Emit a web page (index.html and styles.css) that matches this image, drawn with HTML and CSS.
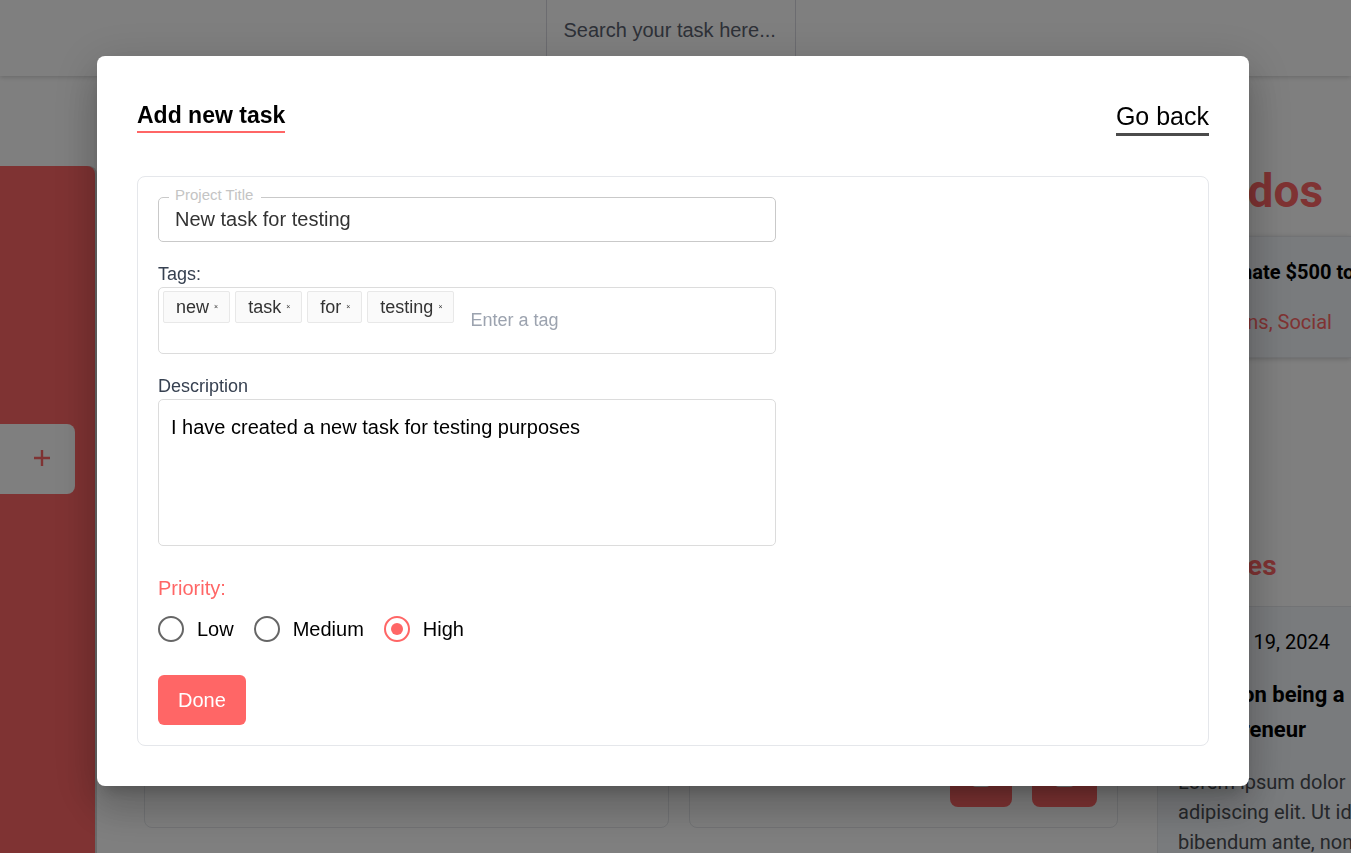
FILE: index.html
```html
<!DOCTYPE html>
<html lang="en">
<head>
<meta charset="utf-8">
<meta name="viewport" content="width=device-width, initial-scale=1">
<title>Add new task</title>
<link rel="stylesheet" href="styles.css">
</head>
<body>
<div class="page">
  <header class="topbar">
    <input class="search" type="text" placeholder="Search your task here..." aria-label="Search tasks">
  </header>
  <div class="columns">
    <nav class="sidebar">
      <button class="add-project" type="button" aria-label="Add project">
        <svg width="16" height="16" viewBox="0 0 16 16" fill="none" stroke="currentColor" stroke-width="2.4"><path d="M8 0v16M0 8h16"/></svg>
      </button>
    </nav>
    <main class="board">
      <article class="card"></article>
      <article class="card card-actions">
        <button class="card-button" type="button" aria-label="Edit task">
          <svg width="20" height="20" viewBox="0 0 20 20" fill="none" stroke="currentColor" stroke-width="2"><path d="M9 3H4a2 2 0 0 0-2 2v11a3 3 0 0 0 3 3h10a3 3 0 0 0 3-3v-5M8 12l9-9 2 2-9 9H8z"/></svg>
        </button>
        <button class="card-button" type="button" aria-label="Delete task">
          <svg width="23" height="20" viewBox="0 0 23 20" fill="none" stroke="currentColor" stroke-width="2"><path d="M1 4h21M8 4V1h7v3M3 4v12a3 3 0 0 0 3 3h11a3 3 0 0 0 3-3V4M9 8v7M14 8v7"/></svg>
        </button>
      </article>
    </main>
    <aside class="side">
      <h2 class="side-title">Todos</h2>
      <section class="todo">
        <h3 class="todo-name">And donate $500 to</h3>
        <p class="todo-tags">Donations, Social</p>
      </section>
      <h2 class="side-title side-title-small">Notes</h2>
      <section class="note">
        <p class="note-date">October 19, 2024</p>
        <h3 class="note-name">Notes on being a<br>entrepreneur</h3>
        <p class="note-text">Lorem ipsum dolor<br>adipiscing elit. Ut id<br>bibendum ante, non</p>
      </section>
    </aside>
  </div>
</div>

<div class="backdrop">
  <div class="dialog" role="dialog" aria-modal="true" aria-labelledby="dialog-title">
    <div class="dialog-head">
      <h1 class="dialog-title" id="dialog-title">Add new task</h1>
      <button class="go-back" type="button">Go back</button>
    </div>
    <form class="form">
      <div class="fields">
        <div class="title-field">
          <label class="title-label" for="title">Project Title</label>
          <input class="title-input" id="title" type="text" value="New task for testing">
        </div>
        <div class="field">
          <label class="label" for="tag">Tags:</label>
          <div class="tags">
            <span class="tag">new <button class="tag-remove" type="button" aria-label="Remove new">×</button></span>
            <span class="tag">task <button class="tag-remove" type="button" aria-label="Remove task">×</button></span>
            <span class="tag">for <button class="tag-remove" type="button" aria-label="Remove for">×</button></span>
            <span class="tag">testing <button class="tag-remove" type="button" aria-label="Remove testing">×</button></span>
            <input class="tag-input" id="tag" type="text" placeholder="Enter a tag">
          </div>
        </div>
        <div class="field">
          <label class="label" for="description">Description</label>
          <textarea class="description" id="description">I have created a new task for testing purposes</textarea>
        </div>
      </div>
      <fieldset class="priority">
        <legend class="priority-title">Priority:</legend>
        <div class="options">
          <label class="option"><input class="radio" type="radio" name="priority" value="low">Low</label>
          <label class="option"><input class="radio" type="radio" name="priority" value="medium">Medium</label>
          <label class="option"><input class="radio" type="radio" name="priority" value="high" checked>High</label>
        </div>
      </fieldset>
      <button class="done" type="submit">Done</button>
    </form>
  </div>
</div>
</body>
</html>
```
FILE: styles.css
```css
*,
*::before {
  box-sizing: border-box;
}

:root {
  --accent: #ff6666;
  --line: #e5e7eb;
}

body,
h1,
h2,
h3,
p,
fieldset {
  margin: 0;
}

body {
  font-family: "Liberation Sans", Arial, sans-serif;
  font-size: 20px;
  line-height: 30px;
  color: #000;
  overflow: hidden;
}

button,
input,
textarea {
  font: inherit;
  color: inherit;
  margin: 0;
}

button {
  border: 0;
  padding: 0;
  background: none;
  cursor: pointer;
}

/* Page under the dialog */

.page {
  display: flex;
  flex-direction: column;
  height: 100vh;
  overflow: hidden;
  font-family: Roboto, sans-serif;
}

.topbar {
  display: flex;
  justify-content: center;
  flex: none;
  height: 76px;
  padding-right: 10px;
  box-shadow: 0 1px 5px rgba(0, 0, 0, 0.2);
}

.search {
  width: 250px;
  height: 62px;
  padding: 0 0 0 17px;
  border: 1px solid #d8d8e0;
  border-top: 0;
  background: none;
  font-family: "Liberation Sans", Arial, sans-serif;
}

.search::placeholder {
  color: #5b6270;
  opacity: 1;
}

.columns {
  display: grid;
  grid-template-columns: 95px 1fr 194px;
  grid-template-rows: minmax(0, 1fr);
  flex: 1;
  min-height: 0;
}

.sidebar {
  margin-top: 90px;
  padding: 258px 20px 0 0;
  background: var(--accent);
  border-radius: 0 8px 0 0;
  box-shadow: 2px 0 0 #d4d4d4;
}

.add-project {
  display: flex;
  align-items: center;
  justify-content: flex-end;
  width: 100%;
  height: 70px;
  padding: 0 25px 2px 0;
  border-radius: 0 8px 8px 0;
  background: #fff;
  color: var(--accent);
}

.board {
  display: grid;
  grid-template-columns: 525fr 429fr;
  gap: 20px;
  padding: 90px 39px 25px 49px;
}

.card {
  border: 1px solid var(--line);
  border-radius: 8px;
}

.card-actions {
  display: flex;
  align-items: flex-end;
  justify-content: flex-end;
  gap: 20px;
  padding: 20px;
}

.card-button {
  display: flex;
  padding: 20px 21px;
  border-radius: 8px;
  background: var(--accent);
  color: #fff;
}

.side {
  white-space: nowrap;
}

.side-title {
  padding: 85px 0 15px 40px;
  font-size: 46px;
  line-height: 60px;
  color: var(--accent);
}

.side-title-small {
  padding: 190px 0 22px 45px;
  font-size: 28px;
  line-height: 36px;
}

.todo,
.note {
  padding: 20px 0 20px 20px;
  border: 1px solid var(--line);
  border-right: 0;
  background: #f3f6fa;
}

.todo {
  box-shadow: 0 1px 5px rgba(0, 0, 0, 0.2);
}

.todo-name {
  margin-bottom: 20px;
  font-size: 20px;
}

.todo-tags {
  color: var(--accent);
}

.note-name {
  margin: 20px 0;
  font-size: 22px;
  line-height: 35px;
}

.note-text {
  color: #4b4f55;
}

/* Dialog */

.backdrop {
  position: fixed;
  inset: 0;
  display: grid;
  place-items: center;
  padding: 0 5px 11px 0;
  background: rgba(0, 0, 0, 0.5);
}

.dialog {
  width: 100%;
  max-width: 1152px;
  padding: 40px;
  border-radius: 8px;
  background: #fff;
  box-shadow:
    0 11px 15px -7px rgba(0, 0, 0, 0.2),
    0 24px 38px 3px rgba(0, 0, 0, 0.14),
    0 9px 46px 8px rgba(0, 0, 0, 0.12);
}

.dialog-head {
  display: flex;
  align-items: center;
  justify-content: space-between;
  margin-bottom: 40px;
}

.dialog-title {
  border-bottom: 2px solid var(--accent);
  font-size: 23px;
  line-height: 32px;
}

.go-back {
  padding-top: 4px;
  border-bottom: 3px solid #4b4b4b;
  font-size: 25px;
  line-height: 33px;
}

.form {
  padding: 20px;
  border: 1px solid var(--line);
  border-radius: 8px;
}

.fields {
  display: flex;
  flex-direction: column;
  gap: 20px;
  width: 60%;
  min-width: 320px;
}

.title-field {
  position: relative;
}

.title-label {
  position: absolute;
  top: -11px;
  left: 11px;
  padding: 0 8px 0 6px;
  background: #fff;
  font-size: 15px;
  line-height: 18px;
  color: #c4c4c4;
}

.title-input {
  display: block;
  width: 100%;
  height: 45px;
  padding: 0 16px;
  border: 1px solid #c9c9c9;
  border-radius: 5px;
  color: #333;
}

.field {
  display: flex;
  flex-direction: column;
}

.label {
  font-size: 18px;
  line-height: 25px;
  color: #374151;
}

.tags {
  display: flex;
  gap: 5px;
  min-height: 67px;
  padding: 3px 4px;
  border: 1px solid #dcdcdc;
  border-radius: 5px;
}

.tag {
  display: flex;
  align-items: center;
  gap: 5px;
  height: 32px;
  padding: 0 11px 0 12px;
  border: 1px solid #e8e8e8;
  border-radius: 2px;
  background: #fafafa;
  font-size: 18px;
  color: #333;
}

.tag-remove {
  font-size: 7px;
  line-height: 12px;
}

.tag-input {
  flex: 1;
  min-width: 0;
  height: 59px;
  padding: 0 11px;
  border: 0;
  background: none;
  font-size: 18px;
}

.tag-input::placeholder {
  color: #9ca3af;
  opacity: 1;
}

.description {
  display: block;
  height: 147px;
  padding: 12px;
  border: 1px solid #dcdcdc;
  border-radius: 5px;
  resize: none;
}

.priority {
  margin-top: 27px;
  padding: 0;
  border: 0;
}

.priority-title {
  padding: 0;
  color: var(--accent);
}

.options {
  display: flex;
  gap: 20px;
  padding: 11px 0 31px;
}

.option {
  display: flex;
  align-items: center;
  gap: 13px;
}

.radio {
  appearance: none;
  display: grid;
  place-items: center;
  width: 26px;
  height: 26px;
  border: 2px solid #666;
  border-radius: 50%;
}

.radio:checked {
  border-color: var(--accent);
}

.radio:checked::before {
  content: "";
  width: 12px;
  height: 12px;
  border-radius: 50%;
  background: var(--accent);
}

.done {
  display: block;
  padding: 10px 20px;
  border-radius: 6px;
  background: var(--accent);
  color: #fff;
}
```
